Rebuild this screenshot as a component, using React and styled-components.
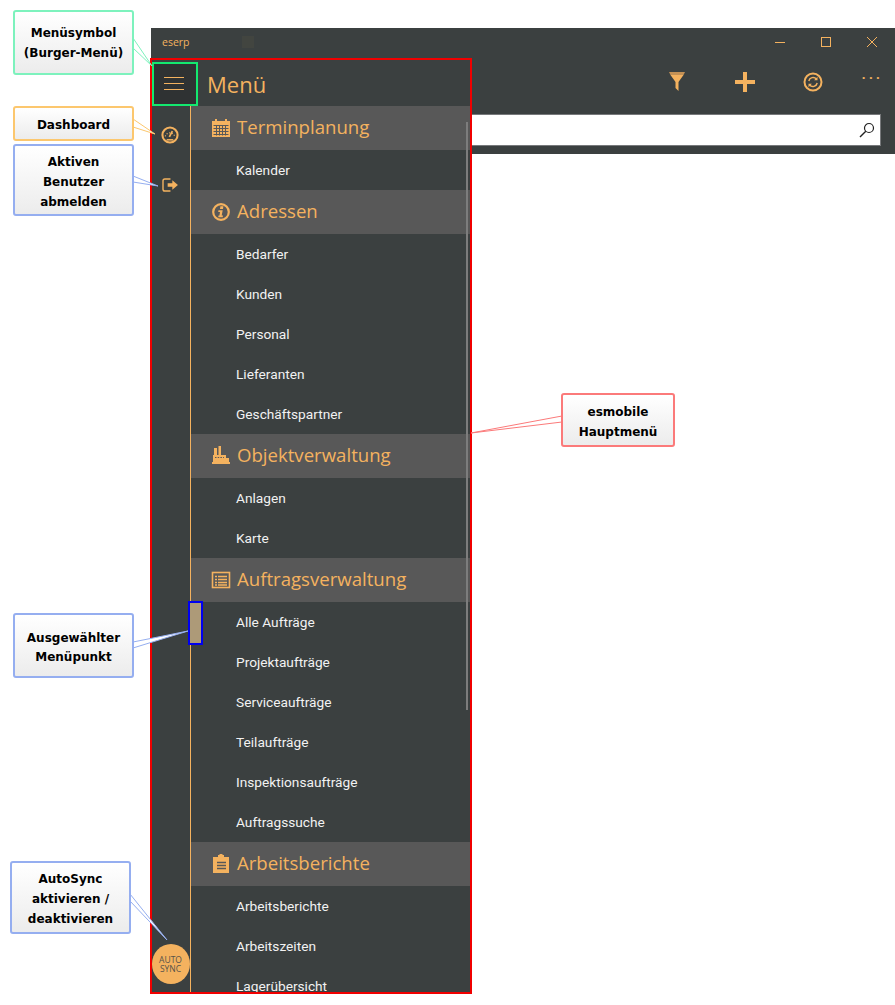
import React from "react";
import styled, { createGlobalStyle } from "styled-components";

const ORANGE = "#f4b25f";
const DARK = "#3b4040";

const GlobalStyle = createGlobalStyle`
  html, body {
    margin: 0;
    background: #fff;
  }
`
const Page = styled.div`
  position: relative;
  width: 895px;
  height: 1005px;
  overflow: hidden;
  padding: 28px 0 0 151px;
  box-sizing: border-box;
  font-family: "Open Sans", "Liberation Sans", sans-serif;
`
const Window = styled.div`
  display: flex;
  flex-direction: column;
  height: 126px;
  background: ${DARK};
`
const TitleBar = styled.div`
  display: flex;
  align-items: center;
  height: 28px;
  padding: 0 0 4px 11px;
  color: ${ORANGE};
  font-size: 10.5px;
`
const AppTitle = styled.span`
  width: 80px;
`
const TitleMark = styled.span`
  width: 12px;
  height: 12px;
  background: #424540;
`
const WindowButtons = styled.div`
  display: flex;
  margin-left: auto;
`
const WindowButton = styled.div`
  display: flex;
  align-items: center;
  justify-content: center;
  width: 46px;
  height: 28px;
`
const Toolbar = styled.div`
  display: flex;
  justify-content: flex-end;
  height: 44px;
`
const Action = styled.div`
  display: flex;
  align-items: center;
  justify-content: center;
  width: ${({$w}) => $w || 68}px;
`
const Dots = styled.span`
  color: ${ORANGE};
  font-size: 13px;
  font-weight: 700;
  letter-spacing: 3.4px;
  line-height: 1;
  margin: -10px 0 0 3px;
`
const SearchRow = styled.div`
  display: flex;
  justify-content: flex-end;
  padding: 10px 14px 0 0;
`
const SearchBox = styled.div`
  display: flex;
  align-items: center;
  justify-content: flex-end;
  width: 600px;
  height: 32px;
  box-sizing: border-box;
  padding-right: 5px;
  background: #fff;
  border: 1px solid #77797b;
`
const Panel = styled.div`
  position: absolute;
  left: 150px;
  top: 58px;
  width: 322px;
  height: 936px;
  box-sizing: border-box;
  display: flex;
  flex-direction: column;
  overflow: hidden;
  background: ${DARK};
  border: 2px solid #f00000;
`
const PanelHead = styled.div`
  display: flex;
  align-items: center;
  flex-shrink: 0;
  height: 46px;
`
const Burger = styled.div`
  display: flex;
  align-items: center;
  justify-content: center;
  width: 46px;
  height: 44px;
  margin-top: 1px;
  padding-right: 2px;
  box-sizing: border-box;
  background: #2f3233;
  border: 2px solid #13e86f;
`
const PanelTitle = styled.div`
  margin: 1px 0 0 9px;
  color: ${ORANGE};
  font-size: 22px;
`
const PanelBody = styled.div`
  display: flex;
  flex: 1;
  min-height: 0;
`
const Rail = styled.div`
  display: flex;
  flex-direction: column;
  align-items: center;
  flex-shrink: 0;
  width: 38px;
  padding: 16px 0 8px;
  box-sizing: content-box;
  border-right: 1px solid ${ORANGE};
`
const RailIcon = styled.div`
  display: flex;
  align-items: center;
  justify-content: center;
  width: 38px;
  height: 26px;
  margin-bottom: 24px;
  padding-right: 2px;
  box-sizing: border-box;
`
const AutoSync = styled.div`
  display: flex;
  align-items: center;
  justify-content: center;
  width: 38px;
  height: 40px;
  margin: auto 0 0 -1px;
  border-radius: 50%;
  background: ${ORANGE};
  color: #57524a;
  font-size: 8.5px;
  line-height: 9px;
  text-align: center;
`
const MenuList = styled.div`
  position: relative;
  flex: 1;
  overflow: hidden;
`
const ScrollBar = styled.div`
  position: absolute;
  top: 16px;
  right: 2px;
  width: 2px;
  height: 588px;
  background: #7d7d7d;
`
const SectionHead = styled.div`
  display: flex;
  align-items: center;
  height: 44px;
  padding-left: 20px;
  background: #585858;
  color: ${ORANGE};
  font-size: 18.6px;
`
const SectionIcon = styled.span`
  display: flex;
  align-items: center;
  justify-content: center;
  width: 20px;
  height: 20px;
  margin-right: 6px;
`
const SectionTitle = styled.span`
  margin-top: -4px;
`
const MenuItem = styled.div`
  display: flex;
  align-items: center;
  height: 40px;
  padding-left: 45px;
  color: #f2f2f2;
  font-family: Roboto, "Liberation Sans", sans-serif;
  font-size: 13.7px;
`
const Selected = styled.div`
  position: absolute;
  left: 188px;
  top: 601px;
  width: 15px;
  height: 44px;
  box-sizing: border-box;
  background: #ad9a78;
  border: 2px solid #0000f0;
`
const Callout = styled.div`
  position: absolute;
  left: ${({$x}) => $x}px;
  top: ${({$y}) => $y}px;
  width: ${({$w}) => $w}px;
  height: ${({$h}) => $h}px;
  box-sizing: border-box;
  display: flex;
  align-items: center;
  justify-content: center;
  padding-top: ${({$pt}) => $pt}px;
  text-align: center;
  color: #000;
  font-family: "DejaVu Sans", sans-serif;
  font-size: 12px;
  font-weight: 700;
  line-height: ${({$lh}) => $lh || 20}px;
  background: linear-gradient(#fff, #ececec);
  border: 2px solid ${({$c}) => $c};
  border-radius: 3px;
`
const Tails = styled.svg`
  position: absolute;
  left: 0;
  top: 0;
`

const callouts = [
  {x: 13, y: 10, w: 121, h: 65, c: "#7df2bd", pt: 0, text: ["Menüsymbol", "(Burger-Menü)"], tail: "133,38 152,66 133,48"},
  {x: 13, y: 106, w: 121, h: 35, c: "#fcc76e", pt: 2, text: ["Dashboard"], tail: "133,119 155,134 133,127"},
  {x: 13, y: 144, w: 121, h: 72, c: "#95aef0", pt: 4, text: ["Aktiven", "Benutzer", "abmelden"], tail: "133,176 158,186 133,182"},
  {x: 13, y: 613, w: 121, h: 65, c: "#95aef0", pt: 4, lh: 19, text: ["Ausgewählter", "Menüpunkt"], tail: "133,642 188,631 133,648"},
  {x: 10, y: 861, w: 121, h: 73, c: "#95aef0", pt: 3, text: ["AutoSync", "aktivieren /", "deaktivieren"], tail: "130,894 167,940 130,901"},
  {x: 561, y: 393, w: 114, h: 54, c: "#fb7a7a", pt: 4, text: ["esmobile", "Hauptmenü"], tail: "562,416 471,433 562,422"},
]

const sections = [
  {title: "Terminplanung", icon: "calendar", items: ["Kalender"]},
  {title: "Adressen", icon: "info", items: ["Bedarfer", "Kunden", "Personal", "Lieferanten", "Geschäftspartner"]},
  {title: "Objektverwaltung", icon: "factory", items: ["Anlagen", "Karte"]},
  {title: "Auftragsverwaltung", icon: "list", items: ["Alle Aufträge", "Projektaufträge", "Serviceaufträge", "Teilaufträge", "Inspektionsaufträge", "Auftragssuche"]},
  {title: "Arbeitsberichte", icon: "clipboard", items: ["Arbeitsberichte", "Arbeitszeiten", "Lagerübersicht"]},
]

const SectionGlyph = ({name}) => {
  if (name === "calendar") return (
    <svg width="20" height="20" viewBox="0 0 20 20" fill={ORANGE}>
      <path d="M1 3h3V1h2v2h8V1h2v2h3v16H1z"/>
      <path stroke="#585858" strokeWidth="1" fill="none" d="M2.5 7.5h15M2.5 10.5h15M2.5 13.5h15M2.5 16.5h15M5.5 7.5v10M8.5 7.5v10M11.5 7.5v10M14.5 7.5v10"/>
    </svg>
  )
  if (name === "info") return (
    <svg width="20" height="20" viewBox="0 0 20 20">
      <circle cx="10" cy="10" r="7.8" fill="none" stroke={ORANGE} strokeWidth="2.2"/>
      <path fill={ORANGE} d="M9.4 4.3h3l-.4 2.6H9zM7.5 8.3h4.2l-1 5.2h1.3l-.3 1.8H7.2l.3-1.8h.9l.6-3.4H7.2z"/>
    </svg>
  )
  if (name === "factory") return (
    <svg width="20" height="20" viewBox="0 0 20 20" fill={ORANGE}>
      <path d="M3 9V2h3v7h1.5V0H10v9h5v3h3v4h1v2H1v-2h1V9z"/>
      <path stroke="#585858" strokeWidth="1.2" strokeDasharray="1.5 1.2" d="M4 11.5h9"/>
    </svg>
  )
  if (name === "list") return (
    <svg width="20" height="20" viewBox="0 0 20 20" fill="none" stroke={ORANGE}>
      <rect x="1.5" y="2.5" width="17" height="15" strokeWidth="1.6"/>
      <path strokeWidth="1.4" d="M4 6.5h2M7 6.5h9M4 9.5h2M7 9.5h9M4 12.5h2M7 12.5h9M4 15h2M7 15h9"/>
    </svg>
  )
  return (
    <svg width="20" height="20" viewBox="0 0 20 20" fill={ORANGE}>
      <path d="M2 3h5V1h1.5V0h3v1H13v2h5v16H2z"/>
      <path stroke="#585858" strokeWidth="1.4" d="M6 8.5h9M6 11.5h9M6 14.5h9"/>
    </svg>
  )
}

export default function App() {
  return (
    <Page>
      <GlobalStyle/>
      <Window>
        <TitleBar>
          <AppTitle>eserp</AppTitle>
          <TitleMark/>
          <WindowButtons>
            <WindowButton>
              <svg width="10" height="10" stroke={ORANGE}><path d="M0 5.5h10"/></svg>
            </WindowButton>
            <WindowButton>
              <svg width="10" height="10" fill="none" stroke={ORANGE}><rect x=".5" y=".5" width="9" height="9"/></svg>
            </WindowButton>
            <WindowButton>
              <svg width="10" height="10" stroke={ORANGE}><path d="M0 0l10 10M10 0L0 10"/></svg>
            </WindowButton>
          </WindowButtons>
        </TitleBar>
        <Toolbar>
          <Action>
            <svg width="18" height="20" viewBox="0 0 18 20">
              <path fill="#c49155" d="M1 0h16l-1.5 3h-13z"/>
              <path fill={ORANGE} d="M2.5 3h13L10.5 10v9L7.5 16v-6z"/>
            </svg>
          </Action>
          <Action>
            <svg width="20" height="20" fill={ORANGE}><path d="M8 0h4v8h8v4h-8v8H8v-8H0V8h8z"/></svg>
          </Action>
          <Action>
            <svg width="20" height="20" viewBox="0 0 20 20" fill="none" stroke={ORANGE}>
              <circle cx="10" cy="10" r="8.5" strokeWidth="2"/>
              <path strokeWidth="1.4" d="M5.8 9a4.4 4.4 0 0 1 7.6-2M14.2 11a4.4 4.4 0 0 1-7.6 2"/>
              <path fill={ORANGE} stroke="none" d="M14.5 4.8v3.4h-3.4zM5.5 15.2v-3.4h3.4z"/>
            </svg>
          </Action>
          <Action $w={48}><Dots>···</Dots></Action>
        </Toolbar>
        <SearchRow>
          <SearchBox>
            <svg width="16" height="16" viewBox="0 0 16 16" fill="none" stroke="#222">
              <circle cx="10" cy="6" r="4.5" strokeWidth="1.2"/>
              <path strokeWidth="1.4" d="M6.8 9.2L1 15"/>
            </svg>
          </SearchBox>
        </SearchRow>
      </Window>

      <Panel>
        <PanelHead>
          <Burger>
            <svg width="20" height="13" stroke={ORANGE}><path d="M0 .5h20M0 6.5h20M0 12.5h20"/></svg>
          </Burger>
          <PanelTitle>Menü</PanelTitle>
        </PanelHead>
        <PanelBody>
          <Rail>
            <RailIcon>
              <svg width="18" height="18" viewBox="0 0 19 19" fill="none" stroke={ORANGE}>
                <circle cx="9.5" cy="9.5" r="8" strokeWidth="2.2"/>
                <path strokeWidth="1.2" strokeDasharray="1.2 1.6" d="M4.5 11a5.2 5.2 0 0 1 10 0"/>
                <path strokeWidth="1.8" d="M8.8 11.5L12 5.5"/>
                <path strokeWidth="1.6" d="M6 14.6h7"/>
              </svg>
            </RailIcon>
            <RailIcon>
              <svg width="16" height="14" viewBox="0 0 17 15" fill="none" stroke={ORANGE}>
                <path strokeWidth="1.5" d="M9 1H3Q1 1 1 3v9q0 2 2 2h6"/>
                <path fill={ORANGE} stroke="none" d="M6 5.5h5V2.5l6 5-6 5v-3H6z"/>
              </svg>
            </RailIcon>
            <AutoSync>AUTO<br/>SYNC</AutoSync>
          </Rail>
          <MenuList>
            {sections.map((section) => (
              <div key={section.title}>
                <SectionHead>
                  <SectionIcon><SectionGlyph name={section.icon}/></SectionIcon>
                  <SectionTitle>{section.title}</SectionTitle>
                </SectionHead>
                {section.items.map((item) => (
                  <MenuItem key={item}>{item}</MenuItem>
                ))}
              </div>
            ))}
            <ScrollBar/>
          </MenuList>
        </PanelBody>
      </Panel>

      <Selected/>

      <Tails width="895" height="1005">
        {callouts.map((c) => (
          <polygon key={c.x + "-" + c.y} points={c.tail} fill="#fff" stroke={c.c} strokeWidth="1"/>
        ))}
      </Tails>
      {callouts.map((c) => (
        <Callout key={c.text[0]} $x={c.x} $y={c.y} $w={c.w} $h={c.h} $c={c.c} $lh={c.lh} $pt={c.pt}>
          <div>
            {c.text.map((line) => <div key={line}>{line}</div>)}
          </div>
        </Callout>
      ))}
    </Page>
  );
}
